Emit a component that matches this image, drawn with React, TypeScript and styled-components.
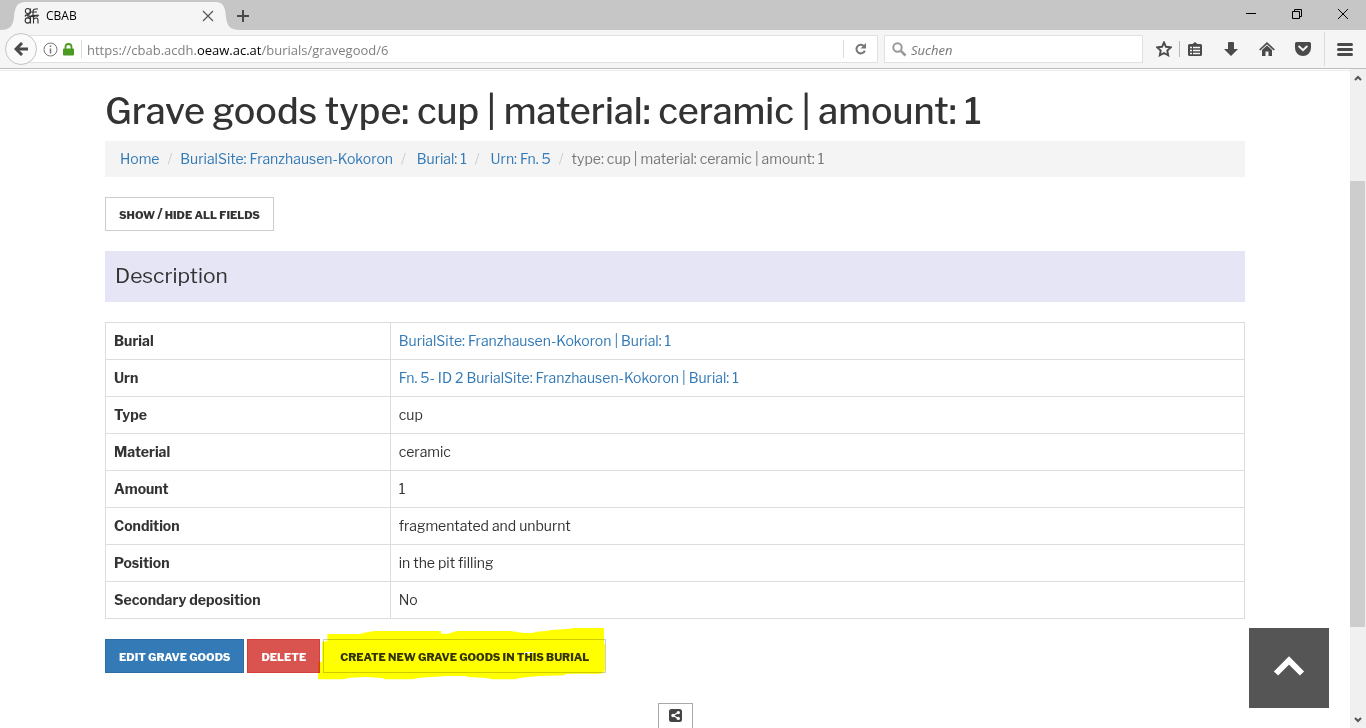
import React from "react";
import styled, { createGlobalStyle, css } from "styled-components";

const pageFont = `"Libre Franklin", "Liberation Sans", Arial, sans-serif`;
const chromeFont = `"Open Sans", "Noto Sans", sans-serif`;

const GlobalStyle = createGlobalStyle`
  *, *::before, *::after { box-sizing: border-box; }
  body { margin: 0; background: #fff; }
  button, input { font: inherit; margin: 0; }
`;

const Browser = styled.div`
  display: flex;
  flex-direction: column;
  height: 100vh;
  overflow: hidden;
  font: 12px/16px ${chromeFont};
`;

const TitleBar = styled.header`
  display: flex;
  align-items: stretch;
  height: 30px;
  flex: none;
  background: #c6c6c6;
`;

const Tab = styled.div`
  position: relative;
  display: flex;
  align-items: center;
  width: 240px;
  padding: 2px 26px 0 24px;
  gap: 6px;
`;

const TabShape = styled.svg`
  position: absolute;
  inset: 0;
`;

const TabTitle = styled.span`
  position: relative;
  flex: 1;
  color: #000;
`;

const IconButton = styled.button<{ $w?: number }>`
  position: relative;
  display: flex;
  align-items: center;
  justify-content: center;
  width: ${(p) => p.$w ?? 36}px;
  flex: none;
  padding: 0;
  border: 0;
  background: none;
  color: #4a4a4a;
`;

const NewTab = styled(IconButton)`
  margin-left: -9px;
  padding-top: 2px;
`;

const ReloadButton = styled(IconButton)`
  padding-right: 4px;
`;

const WindowControls = styled.div`
  display: flex;
  margin-left: auto;
  height: 28px;
`;

const Toolbar = styled.nav`
  display: flex;
  align-items: center;
  height: 39px;
  flex: none;
  padding: 0 1px 0 5px;
  background: #f5f5f5;
  border-bottom: 1px solid #bdbdbd;
`;

const BackButton = styled.button`
  position: relative;
  display: flex;
  align-items: center;
  justify-content: center;
  width: 32px;
  height: 32px;
  flex: none;
  padding: 0;
  border: 1px solid #c4c4c4;
  border-radius: 50%;
  background: #fafafa;
`;

const field = css`
  display: flex;
  align-items: center;
  height: 28px;
  border: 1px solid #e1e1e1;
  background: #fff;
`;

const AddressBar = styled.div`
  ${field}
  flex: 1;
  margin-left: -10px;
  padding-left: 15px;
  gap: 5px;
`;

const SiteIdentity = styled.span`
  display: flex;
  align-items: center;
  gap: 5px;
  padding-right: 2px;
`;

const Divider = styled.span<{ $h: number; $c?: string }>`
  width: 1px;
  height: ${(p) => p.$h}px;
  flex: none;
  background: ${(p) => p.$c ?? "#dcdcdc"};
`;

const Url = styled.a`
  flex: 1;
  padding-top: 2px;
  font-size: 13px;
  color: #808080;
  text-decoration: none;
  b { font-weight: 400; color: #000; }
`;

const SearchBox = styled.label`
  ${field}
  width: 259px;
  margin: 0 6px;
  padding-left: 7px;
  gap: 4px;
`;

const SearchInput = styled.input`
  flex: 1;
  min-width: 0;
  padding: 2px 0 0;
  border: 0;
  outline: 0;
  background: none;
  font-size: 13px;
  &::placeholder { color: #757575; opacity: 1; font-style: italic; }
`;

const Viewport = styled.div`
  display: flex;
  flex: 1;
  min-height: 0;
`;

const Page = styled.main`
  position: relative;
  flex: 1;
  min-width: 0;
  overflow: hidden;
  margin-top: 1px;
  border-top: 1px solid #ededed;
  font: 14px/20px ${pageFont};
  color: #333;
`;

const Container = styled.div`
  max-width: 1140px;
  margin: 0 auto;
  padding-top: 19px;
`;

const Title = styled.h1`
  margin: 0 0 8px;
  font-size: 36px;
  line-height: 43px;
  font-weight: 500;
  white-space: nowrap;
`;

const Link = styled.a`
  color: #337ab7;
  text-decoration: none;
`;

const Crumbs = styled.ol`
  display: flex;
  margin: 0 0 20px;
  padding: 8px 15px;
  list-style: none;
  background: #f4f4f4;
  color: #777;
`;

const Crumb = styled.li<{ $loose?: boolean }>`
  &:not(:first-child)::before {
    content: "/";
    padding: 0 ${(p) => (p.$loose ? 11 : 8)}px 0 8px;
    color: #ccc;
  }
`;

const tones = {
  plain: ["#fff", "#ccc", "#333"],
  primary: ["#337ab7", "#2e6da4", "#fff"],
  danger: ["#d9534f", "#d43f3a", "#fff"],
};

const Button = styled.button<{ $tone: keyof typeof tones; $minWidth?: number }>`
  position: relative;
  height: 34px;
  min-width: ${(p) => p.$minWidth ?? 0}px;
  padding: 0 13px;
  border: 1px solid ${(p) => tones[p.$tone][1]};
  background: ${(p) => tones[p.$tone][0]};
  color: ${(p) => tones[p.$tone][2]};
  font-size: 11px;
  font-weight: 800;
  line-height: 20px;
  white-space: nowrap;
`;

const Slash = styled.span`
  font-size: 14px;
`;

const SectionTitle = styled.h2`
  margin: 20px 0;
  padding: 13px 10px 14px;
  background: #e6e5f5;
  font-size: 21px;
  line-height: 24px;
  font-weight: 400;
`;

const Table = styled.table`
  width: 100%;
  border-collapse: collapse;
  th, td {
    height: 37px;
    padding: 8px;
    border: 1px solid #ddd;
    text-align: left;
  }
  th { width: 25%; font-weight: 700; }
`;

const Actions = styled.div`
  display: flex;
  gap: 3px;
  margin-top: 20px;
  button { padding-top: 2px; }
`;

const Marker = styled.svg`
  position: absolute;
  left: -8px;
  top: -14px;
  width: 290px;
  height: 54px;
  mix-blend-mode: multiply;
  pointer-events: none;
`;

const Footer = styled.footer`
  display: flex;
  justify-content: center;
  margin-top: 30px;
`;

const ShareButton = styled.button`
  display: flex;
  justify-content: center;
  width: 35px;
  height: 34px;
  padding: 5px 0 0;
  border: 1px solid #aaa;
  background: #fff;
`;

const ToTop = styled.button`
  position: absolute;
  right: 21px;
  bottom: 20px;
  width: 80px;
  height: 80px;
  padding: 0;
  border: 0;
  background: #555;
`;

const Scrollbar = styled.div`
  display: flex;
  flex-direction: column;
  width: 16px;
  flex: none;
  background: #f0f0f0;
`;

const ScrollTrack = styled.div`
  display: grid;
  grid-template-rows: 95fr 446fr 84fr;
  flex: 1;
`;

const ScrollThumb = styled.div`
  grid-row: 2;
  margin-right: 1px;
  background: #cdcdcd;
`;

const ScrollArrow = styled.button`
  height: 17px;
  padding: 0;
  border: 0;
  background: none;
  line-height: 0;
`;

const rows: { label: string; value: string; link?: boolean }[] = [
  { label: "Burial", value: "BurialSite: Franzhausen-Kokoron | Burial: 1", link: true },
  { label: "Urn", value: "Fn. 5- ID 2 BurialSite: Franzhausen-Kokoron | Burial: 1", link: true },
  { label: "Type", value: "cup" },
  { label: "Material", value: "ceramic" },
  { label: "Amount", value: "1" },
  { label: "Condition", value: "fragmentated and unburnt" },
  { label: "Position", value: "in the pit filling" },
  { label: "Secondary deposition", value: "No" },
];

const crumbs = [
  { text: "Home" },
  { text: "BurialSite: Franzhausen-Kokoron" },
  { text: "Burial: 1", loose: true },
  { text: "Urn: Fn. 5", loose: true },
];

export default function App() {
  return (
    <Browser>
      <GlobalStyle />
      <TitleBar>
        <Tab>
          <TabShape width="240" height="30" aria-hidden="true">
            <path d="M0 30C9 30 13 27 14 17C15 7 17 2 26 2H215C224 2 225 8 226 17C227 26 230 30 240 30Z" fill="#f5f5f5" />
          </TabShape>
          <IconButton as="span" $w={16}>
            <svg width="16" height="16" viewBox="0 0 16 16" fill="none" stroke="#333" strokeWidth="1.1">
              <circle cx="3.800" cy="3" r="2.500" />
              <path d="M6.500 .5V4Q6.500 6 4 6.500Q1.500 7 1 8.500M1 7.500Q2 6.500 4 7.500L7 8.500Q10 9 12 7.500Q13.500 6.500 15 7.500M3 9Q5 9.500 7 8Q10 6.500 14 8.500" />
              <circle cx="3.800" cy="12.500" r="2.600" />
              <path d="M6.500 9V15.500M9 7.500V3.500Q9 1 11.500 1H14M7 4H13M9.500 15.500V9M9.500 11Q14 8.500 14 12.500V15.500" />
            </svg>
          </IconButton>
          <TabTitle>CBAB</TabTitle>
          <IconButton $w={12} aria-label="Close tab">
            <svg width="12" height="12" viewBox="0 0 12 12" stroke="#555" strokeWidth="1.200"><path d="M1 1L11 11M11 1L1 11" /></svg>
          </IconButton>
        </Tab>
        <NewTab $w={24} aria-label="New tab">
          <svg width="12" height="12" viewBox="0 0 12 12" stroke="#4a4a4a" strokeWidth="2"><path d="M0 6H12M6 0V12" /></svg>
        </NewTab>
        <WindowControls>
          <IconButton $w={46} aria-label="Minimize">
            <svg width="10" height="10" stroke="#000"><path d="M0 4.500H10" /></svg>
          </IconButton>
          <IconButton $w={46} aria-label="Restore">
            <svg width="10" height="10" stroke="#000" fill="none"><path d="M.5 2.500H7.500V9.500H.5ZM2.500 2.500V.5H9.500V7.500H7.500" /></svg>
          </IconButton>
          <IconButton $w={46} aria-label="Close">
            <svg width="10" height="10" stroke="#000"><path d="M0 0L10 10M10 0L0 10" /></svg>
          </IconButton>
        </WindowControls>
      </TitleBar>

      <Toolbar>
        <BackButton aria-label="Back">
          <svg width="14" height="14" viewBox="0 0 14 14" fill="none" stroke="#4a4a4a" strokeWidth="3"><path d="M8 1L2 7L8 13M2.500 7H14" /></svg>
        </BackButton>
        <AddressBar>
          <SiteIdentity>
            <svg width="15" height="15" viewBox="0 0 15 15" fill="none" stroke="#777">
              <circle cx="7.500" cy="7.500" r="6.500" />
              <path d="M7.500 6.500V11.500M7.500 3.500V5" strokeWidth="1.500" />
            </svg>
            <svg width="11" height="13" viewBox="0 0 11 13">
              <path d="M2.500 6V4A3 3 0 0 1 8.500 4V6" fill="none" stroke="#4b9a22" strokeWidth="1.800" />
              <rect x="0" y="5.500" width="11" height="7" rx="1" fill="#4b9a22" />
            </svg>
          </SiteIdentity>
          <Divider $h={18} />
          <Url href="#">https://cbab.acdh.<b>oeaw.ac.at</b>/burials/gravegood/6</Url>
          <Divider $h={18} />
          <ReloadButton $w={28} aria-label="Reload">
            <svg width="12" height="12" viewBox="0 0 12 12"><path d="M9.800 7.600A4.300 4.300 0 1 1 9 3.200" fill="none" stroke="#777" strokeWidth="2" /><path d="M11 0V5.500H5.500Z" fill="#777" /></svg>
          </ReloadButton>
        </AddressBar>
        <SearchBox>
          <svg width="15" height="15" viewBox="0 0 15 15" fill="none" stroke="#999"><circle cx="5.500" cy="5.500" r="4.200" strokeWidth="2" /><path d="M8.800 8.800L13.500 13.500" strokeWidth="2.600" /></svg>
          <SearchInput placeholder="Suchen" aria-label="Suchen" />
        </SearchBox>
        <IconButton $w={30} aria-label="Bookmark this page">
          <svg width="16" height="16" viewBox="0 0 16 16"><path d="M8 1.500L10 5.800L14.700 6.400L11.300 9.600L12.200 14.300L8 12L3.800 14.300L4.700 9.600L1.300 6.400L6 5.800Z" fill="none" stroke="#4a4a4a" strokeWidth="1.900" /></svg>
        </IconButton>
        <Divider $h={16} $c="#bbb" />
        <IconButton $w={30} aria-label="Show bookmarks">
          <svg width="14" height="14" viewBox="0 0 14 14"><path d="M1.500 2H4.500L7 0L9.500 2H12.500Q14 2 14 3.500V12.500Q14 14 12.500 14H1.500Q0 14 0 12.500V3.500Q0 2 1.500 2Z" fill="#4a4a4a" /><path d="M2 5.500H4M5 5.500H12M2 8.500H4M5 8.500H12M2 11.500H4M5 11.500H12" stroke="#f5f5f5" strokeWidth="1.600" /></svg>
        </IconButton>
        <IconButton $w={41} aria-label="Downloads">
          <svg width="14" height="14" viewBox="0 0 14 14" fill="#4a4a4a"><path d="M4 1Q4 0 5 0H9Q10 0 10 1V7H14L7 14L0 7H4Z" /></svg>
        </IconButton>
        <IconButton $w={31} aria-label="Home">
          <svg width="16" height="14" viewBox="0 0 16 14"><path d="M.7 8L8 1.200L15.300 8" fill="none" stroke="#4a4a4a" strokeWidth="1.700" /><path d="M3 8L8 3.500L13 8V14H9.500V9.500H6.500V14H3Z" fill="#4a4a4a" /></svg>
        </IconButton>
        <IconButton $w={42} aria-label="Pocket">
          <svg width="16" height="14" viewBox="0 0 16 14"><path d="M1.500 0H14.500Q16 0 16 1.500V6A8 8 0 0 1 0 6V1.500Q0 0 1.500 0Z" fill="#4a4a4a" /><path d="M4.200 4.500L8 8.200L11.800 4.500" fill="none" stroke="#f5f5f5" strokeWidth="2" strokeLinecap="round" /></svg>
        </IconButton>
        <Divider $h={34} />
        <IconButton $w={40} aria-label="Menu">
          <svg width="16" height="13" viewBox="0 0 16 13" stroke="#4a4a4a" strokeWidth="3" strokeLinecap="round"><path d="M1.500 1.500H14.500M1.500 6.500H14.500M1.500 11.500H14.500" /></svg>
        </IconButton>
      </Toolbar>

      <Viewport>
        <Page>
          <Container>
            <Title>Grave goods type: cup | material: ceramic | amount: 1</Title>
            <Crumbs>
              {crumbs.map((c) => (
                <Crumb key={c.text} $loose={c.loose}><Link href="#">{c.text}</Link></Crumb>
              ))}
              <Crumb>type: cup | material: ceramic | amount: 1</Crumb>
            </Crumbs>
            <Button $tone="plain">SHOW <Slash>/</Slash> HIDE ALL FIELDS</Button>
            <SectionTitle>Description</SectionTitle>
            <Table>
              <tbody>
                {rows.map((r) => (
                  <tr key={r.label}>
                    <th scope="row">{r.label}</th>
                    <td>{r.link ? <Link href="#">{r.value}</Link> : r.value}</td>
                  </tr>
                ))}
              </tbody>
            </Table>
            <Actions>
              <Button $tone="primary">EDIT GRAVE GOODS</Button>
              <Button $tone="danger">DELETE</Button>
              <Button $tone="plain" $minWidth={283}>
                CREATE NEW GRAVE GOODS IN THIS BURIAL
                <Marker viewBox="660 18 870 162" aria-hidden="true">
                  <path
                    fill="#ff0"
                    fillRule="evenodd"
                    d="M694 42H792L804 38L834 33H1035V41H1056L1083 33H1243L1283 39H1310L1322 35L1350 33L1366 30L1412 27L1437 24H1524V72H1527V153L1515 161H1434L1408 162L1405 166L1330 168L1275 173L1257 178H1188L1172 174L1116 171L1110 168H1053L972 173L948 178H867L858 174L807 171L762 173L741 178H666V126H678V66L694 63ZM1262 99H1288V96H1313V99H1300V102H1262Z"
                  />
                </Marker>
              </Button>
            </Actions>
            <Footer>
              <ShareButton aria-label="Share">
                <svg width="13" height="13" viewBox="0 0 13 13"><rect width="13" height="13" rx="2.500" fill="#444" /><path d="M9.500 3.500L4 6.500L9.500 9.500" fill="none" stroke="#fff" strokeWidth="1.300" /><circle cx="9.300" cy="3.600" r="1.700" fill="#fff" /><circle cx="4" cy="6.500" r="1.700" fill="#fff" /><circle cx="9.300" cy="9.400" r="1.700" fill="#fff" /></svg>
              </ShareButton>
            </Footer>
          </Container>
          <ToTop aria-label="Back to top">
            <svg width="32" height="20" viewBox="0 0 32 20" fill="none" stroke="#fff" strokeWidth="6"><path d="M3 17.500L16 4.500L29 17.500" /></svg>
          </ToTop>
        </Page>
        <Scrollbar>
          <ScrollArrow aria-label="Scroll up">
            <svg width="8" height="6" viewBox="0 0 8 6" fill="none" stroke="#555" strokeWidth="2"><path d="M1 5L4 2L7 5" /></svg>
          </ScrollArrow>
          <ScrollTrack><ScrollThumb /></ScrollTrack>
          <ScrollArrow aria-label="Scroll down">
            <svg width="8" height="6" viewBox="0 0 8 6" fill="none" stroke="#555" strokeWidth="2"><path d="M1 1L4 4L7 1" /></svg>
          </ScrollArrow>
        </Scrollbar>
      </Viewport>
    </Browser>
  );
}
